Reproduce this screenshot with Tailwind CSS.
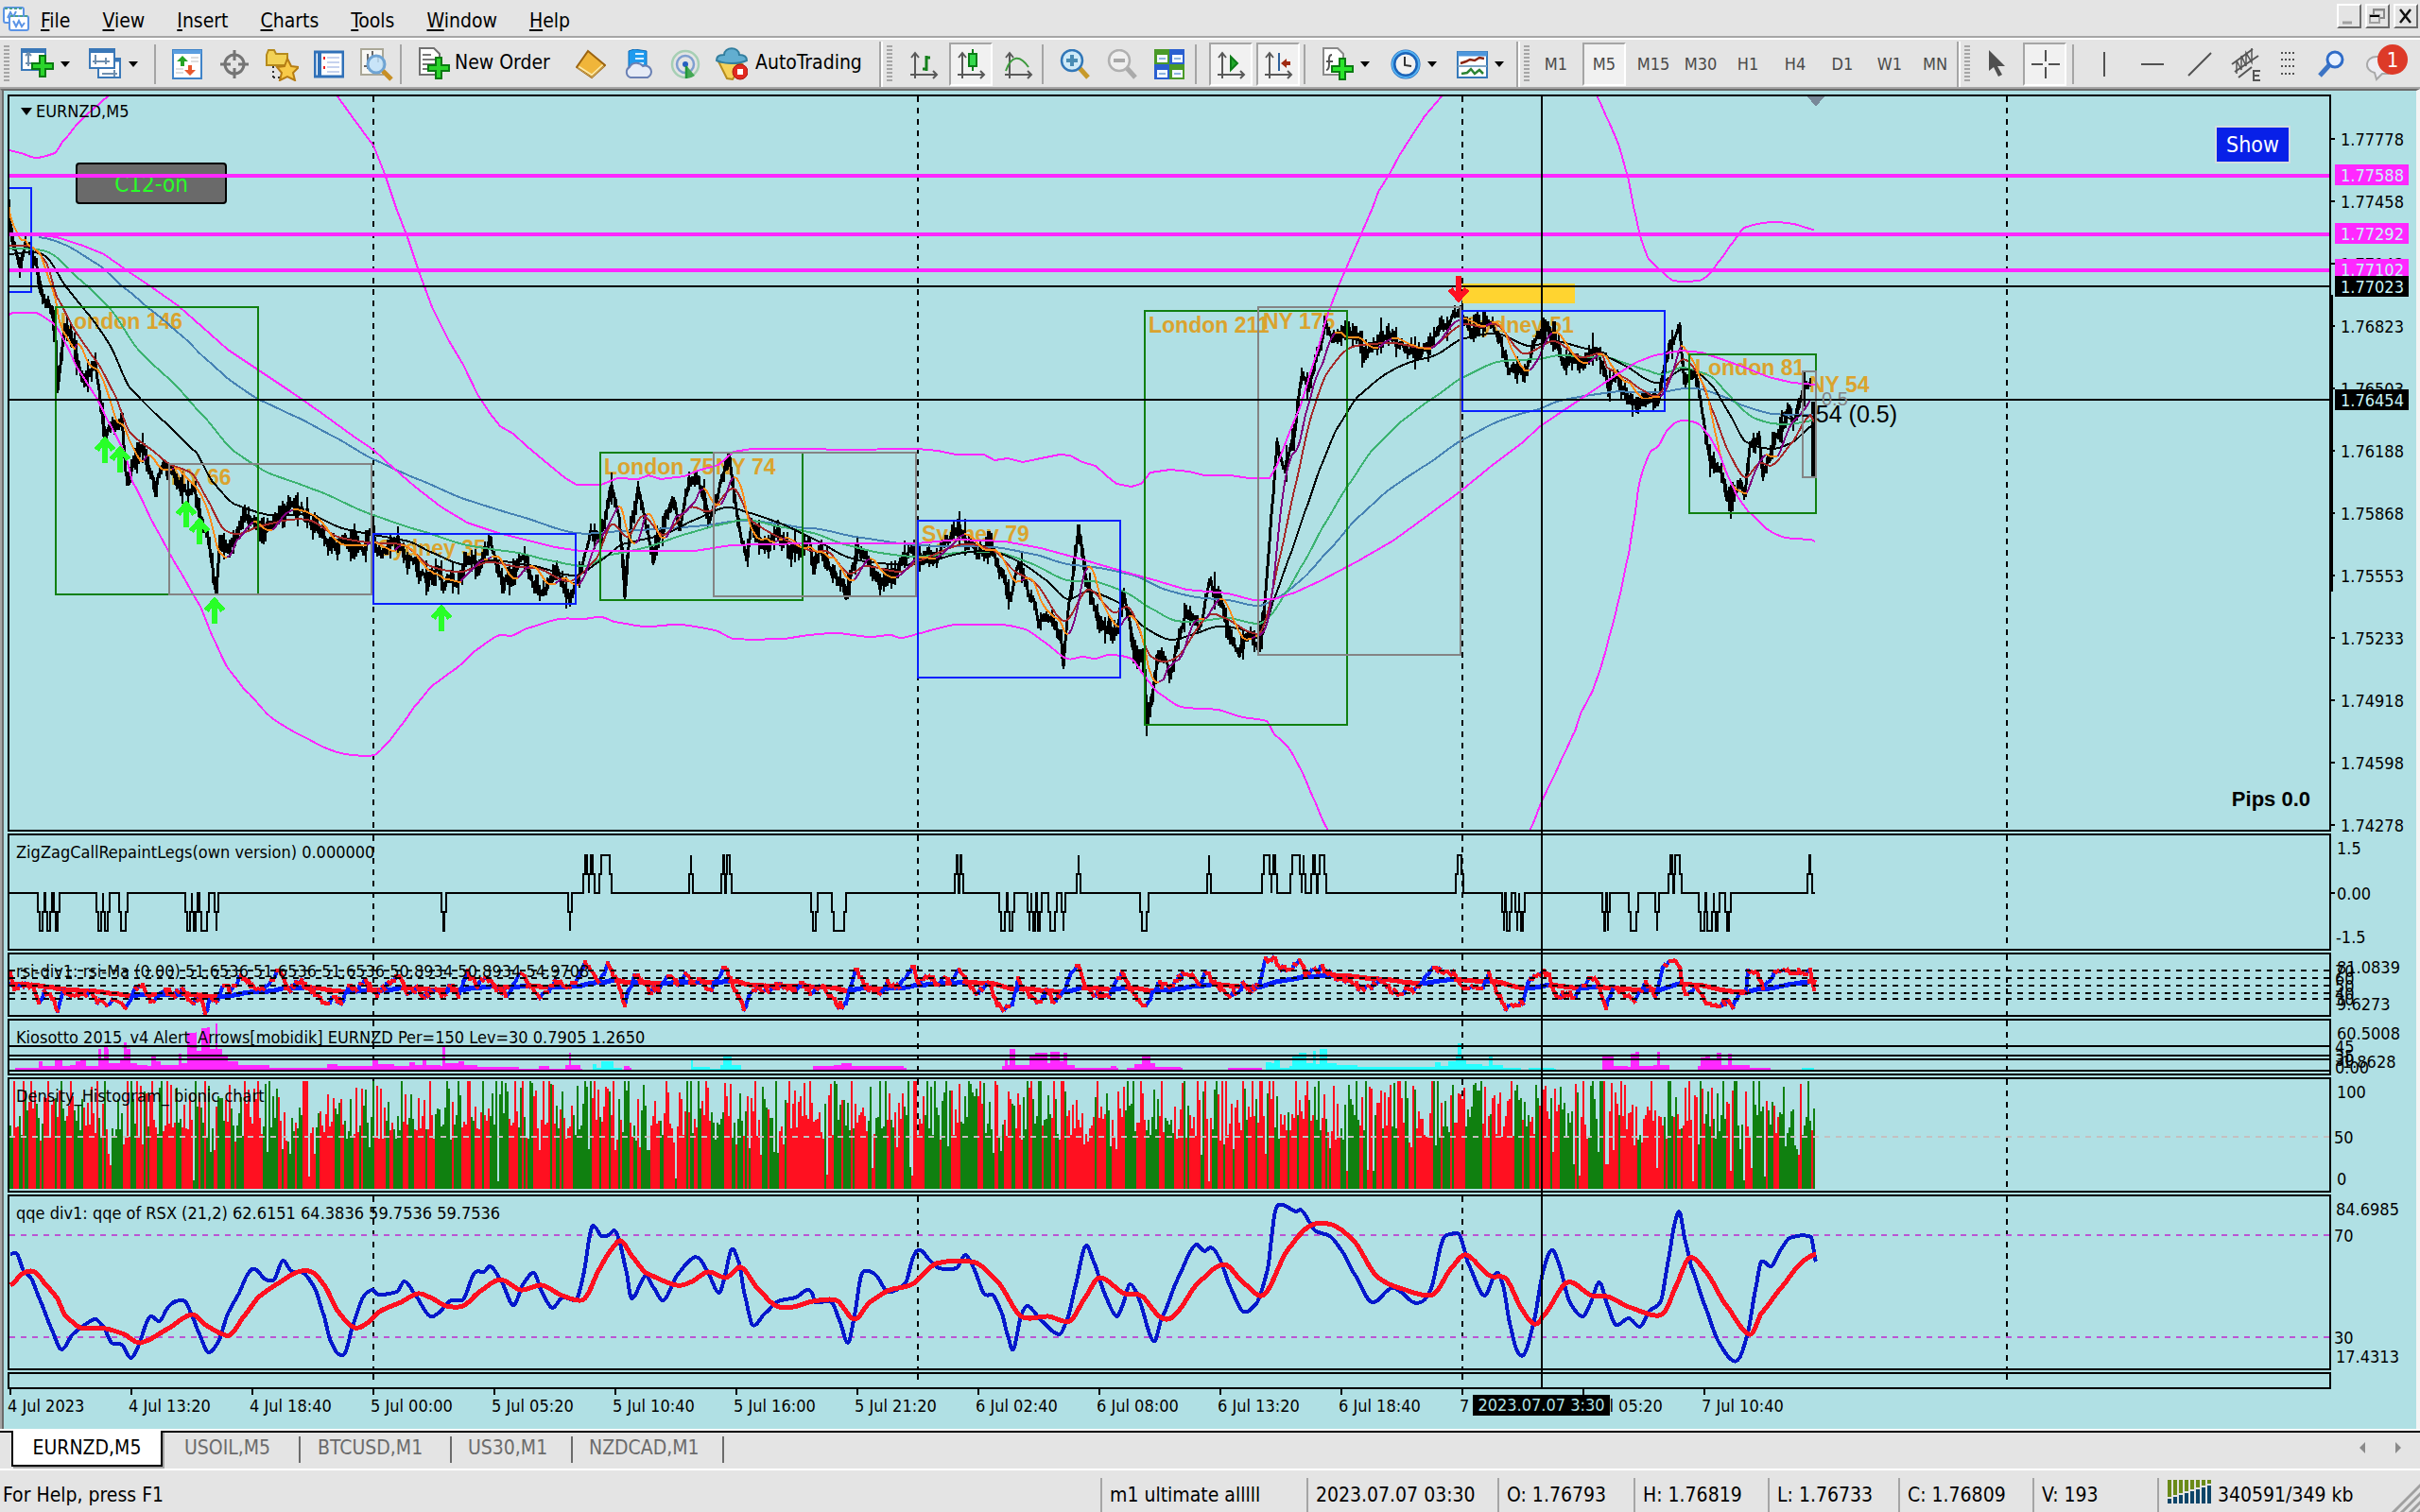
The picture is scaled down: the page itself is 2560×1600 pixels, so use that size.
<!DOCTYPE html>
<html lang="en">
<head>
  <meta charset="utf-8">
  <meta name="viewport" content="width=device-width, initial-scale=1">
  <title>EURNZD,M5</title>
  <script src="https://cdn.jsdelivr.net/npm/@tailwindcss/browser@4"></script>
</head>
<body class="flex min-h-screen flex-col overflow-x-hidden bg-[#e4e4e4] font-['DejaVu_Sans_Condensed','DejaVu_Sans',sans-serif] text-[21px] leading-6 text-black">

  <!-- menu bar -->
  <header class="flex h-10 items-center border-b-2 border-[#a5a5a5] pl-[3px] pr-0.5">
    <svg class="mr-3 h-7 w-7" viewBox="0 0 28 28" fill="#fff" stroke="#5b94e6" stroke-width="2">
      <rect x="1" y="3" width="21" height="16" rx="2"/><path d="M2 4h19" stroke="#49a08c" stroke-dasharray="3 2"/><path d="M5 14l3-6 3 5 3-6" fill="none"/>
      <rect x="7" y="12" width="20" height="15" rx="2"/><path d="M8 12h18" stroke="#49a08c" stroke-dasharray="3 2"/><path d="M11 17l3 6 3-6 3 6 3-4" fill="none"/>
    </svg>
    <nav class="flex flex-1 gap-[34px] pt-1.5">
      <a href="#"><u>F</u>ile</a>
      <a href="#"><u>V</u>iew</a>
      <a href="#"><u>I</u>nsert</a>
      <a href="#"><u>C</u>harts</a>
      <a href="#"><u>T</u>ools</a>
      <a href="#"><u>W</u>indow</a>
      <a href="#"><u>H</u>elp</a>
    </nav>
    <div class="flex gap-1 self-start pt-1">
      <button aria-label="Minimize" class="h-[26px] w-[26px] border-2 border-t-white border-l-white border-r-[#6b6b6b] border-b-[#6b6b6b]">
        <svg class="h-[22px] w-[22px]" viewBox="0 0 22 22"><path d="M4 18h10" stroke="#a0a0a0" stroke-width="3"/></svg>
      </button>
      <button aria-label="Restore" class="h-[26px] w-[26px] border-2 border-t-white border-l-white border-r-[#6b6b6b] border-b-[#6b6b6b]">
        <svg class="h-[22px] w-[22px]" viewBox="0 0 22 22" fill="none" stroke-width="2"><path d="M7 9V4h11v9h-4M7 4.500h11" stroke="#888"/><path d="M3 10h10v8H3zM3 11h10" stroke="#a0a0a0"/><path d="M3 11h10" stroke="#000"/></svg>
      </button>
      <button aria-label="Close" class="h-[26px] w-[26px] border-2 border-t-white border-l-white border-r-[#6b6b6b] border-b-[#6b6b6b]">
        <svg class="h-[22px] w-[22px]" viewBox="0 0 22 22"><path d="M5 4l11 14M16 4L5 18" stroke="#111" stroke-width="2.500"/></svg>
      </button>
    </div>
  </header>

  <!-- toolbar -->
  <div class="flex h-[54px] items-center border-t-2 border-b-2 border-t-white border-b-[#a5a5a5] pt-0.5 pl-1">
    <i class="mr-1.5 h-10 w-1.5 bg-[repeating-linear-gradient(#a5a5a5_0_2px,transparent_2px_4px)]"></i>
    <button aria-label="New chart" class="flex w-[72px] items-center gap-1.5 pl-1.5">
      <svg class="h-9 w-9" viewBox="0 0 36 36"><rect x="1" y="2" width="25" height="22" fill="#fff" stroke="#3a78b8" stroke-width="2"/><path d="M1 4h25" stroke="#3a78b8" stroke-width="4"/><path d="M8 7v13M5 9l3-3 3 3M5 17h12" stroke="#6f8fae" stroke-width="2" fill="none"/><path d="M20 9h6v8h8v6h-8v8h-6v-8h-8v-6h8z" fill="#2bd52b" stroke="#0a7a12" stroke-width="2"/></svg>
      <svg class="h-1.5 w-2.5" viewBox="0 0 10 6"><path d="M0 0h10L5 6z"/></svg>
    </button>
    <button aria-label="Profiles" class="flex w-[72px] items-center gap-1.5 pl-1.5">
      <svg class="h-9 w-9" viewBox="0 0 36 36" fill="#fff" stroke="#3a78b8" stroke-width="2"><rect x="10" y="12" width="23" height="20"/><path d="M10 14h23" stroke-width="3"/><path d="M14 28h16M27 24v7" stroke="#6f8fae"/><rect x="1" y="2" width="26" height="20"/><path d="M1 4h26" stroke-width="4"/><path d="M7 8v10M4 15h18M18 11v7" stroke="#6f8fae"/></svg>
      <svg class="h-1.5 w-2.5" viewBox="0 0 10 6"><path d="M0 0h10L5 6z"/></svg>
    </button>
    <i class="mr-1.5 ml-[3px] h-[42px] w-0.5 bg-[#a5a5a5]"></i>
    <button aria-label="Market watch" class="flex w-[50px] justify-center pl-1">
      <svg class="h-8 w-8" viewBox="0 0 32 32"><rect x="1" y="1" width="30" height="30" fill="#fff" stroke="#3f83c8" stroke-width="2"/><path d="M1 3h30" stroke="#5c9fe0" stroke-width="4"/><path d="M20 9h8M20 13h8M4 21h8M4 25h8" stroke="#ddd" stroke-width="2"/><path d="M11 7l6 6h-4v5H9v-5H5z" fill="#24a324"/><path d="M19 28l-6-6h4v-5h4v5h4z" fill="#e8582e"/></svg>
    </button>
    <button aria-label="Data window" class="flex w-[50px] justify-center pl-1">
      <svg class="h-8 w-8" viewBox="0 0 32 32" fill="none" stroke="#747474" stroke-width="3"><circle cx="16" cy="16" r="10"/><path d="M16 1v11M16 20v11M1 16h11M20 16h11"/></svg>
    </button>
    <button aria-label="Navigator" class="flex w-[50px] justify-center pl-1">
      <svg class="h-9 w-9" viewBox="0 0 36 36"><path d="M2 8l2-5h6l2 4h12v12H2z" fill="#f2d256" stroke="#b58a1c" stroke-width="2"/><path d="M9 20v13M9 32h8" stroke="#333" stroke-width="2" stroke-dasharray="2 3"/><path d="M24 12l4 8 8 1-6 6 2 8-8-4-8 4 2-8-5-6 8-1z" fill="#f8ca48" stroke="#b57c14" stroke-width="2"/></svg>
    </button>
    <button aria-label="Terminal" class="flex w-[50px] justify-center pl-1">
      <svg class="h-8 w-8" viewBox="0 0 32 32"><rect x="1" y="3" width="30" height="26" fill="#fff" stroke="#2f70b8" stroke-width="3"/><path d="M6 3v26" stroke="#2f70b8" stroke-width="4"/><path d="M14 9h13M14 14h13M14 19h13M14 24h13" stroke="#c6d2ee" stroke-width="2"/><path d="M11 8v3M11 18v3" stroke="#e22" stroke-width="2"/></svg>
    </button>
    <button aria-label="Strategy tester" class="flex w-[50px] justify-center pl-1">
      <svg class="h-9 w-9" viewBox="0 0 36 36"><rect x="2" y="2" width="23" height="27" fill="#f7f7f4" stroke="#aaa797" stroke-width="2"/><path d="M9 7v16M14 4v6M20 8v8M5 20h6" stroke="#666" stroke-width="2"/><circle cx="18" cy="18" r="9" fill="#bfe0f8" fill-opacity=".85" stroke="#6fa4d4" stroke-width="3"/><path d="M25 25l9 9" stroke="#c78f25" stroke-width="5"/></svg>
    </button>
    <i class="mx-0.5 h-[42px] w-0.5 bg-[#a5a5a5]"></i>
    <button class="flex w-[173px] items-center gap-1 pl-4">
      <svg class="h-9 w-[34px]" viewBox="0 0 34 36"><path d="M1 1h15l6 6v22H1z" fill="#fff" stroke="#707070" stroke-width="2"/><path d="M4 8h9M4 13h13M4 18h13M4 23h8" stroke="#777" stroke-width="2"/><path d="M18 11h6v8h8v6h-8v8h-6v-8h-8v-6h8z" fill="#2bd52b" stroke="#0a7a12" stroke-width="2"/></svg>
      <span class="-mt-1">New Order</span>
    </button>
    <button aria-label="MetaEditor" class="flex w-[50px] justify-center">
      <svg class="h-8 w-8" viewBox="0 0 32 32"><path d="M13 2l18 15-14 13L1 19z" fill="#f0b53a" stroke="#9c6410" stroke-width="2"/><path d="M3 19l14 9 12-11" stroke="#fce8a4" stroke-width="3" fill="none"/><path d="M3 20l14 9 13-12" stroke="#b07818" stroke-width="1" fill="none"/></svg>
    </button>
    <button aria-label="VPS" class="flex w-[50px] justify-center">
      <svg class="h-8 w-8" viewBox="0 0 32 32"><path d="M6 2l6-2 13 2v19H6z" fill="#1f9bef" stroke="#0f6cb8"/><path d="M13 5h9M13 10h9M13 15h9" stroke="#d9f0ff" stroke-width="2"/><path d="M8 30a6 6 0 0 1-1-11 8 7 0 0 1 14-1 6 6 0 0 1 5 12z" fill="#e6ebf6" stroke="#6a80b4" stroke-width="2"/></svg>
    </button>
    <button aria-label="Signals" class="flex w-[50px] justify-center">
      <svg class="h-8 w-8" viewBox="0 0 32 32" fill="none" stroke-width="2.500"><circle cx="16" cy="16" r="14" stroke="#a6cfb4"/><circle cx="16" cy="16" r="9" stroke="#7f9fd0"/><path d="M16 16L26 28A15 15 0 0 1 16 31z" fill="#45a855" stroke="none"/><circle cx="16" cy="16" r="3" fill="#2760c0" stroke="none"/><path d="M17 18v13" stroke="#22963a"/></svg>
    </button>
    <button class="flex w-[180px] items-center gap-2 pl-[7px]">
      <svg class="h-9 w-[34px]" viewBox="0 0 34 36"><path d="M3 15l9 18 6 1 10-16z" fill="#f5d25a" stroke="#b78d1e" stroke-width="2"/><path d="M1 14c0-5 4-6 8-6 0-9 16-9 16 0 5 0 8 2 8 6-8 4-24 4-32 0z" fill="#62aed0" stroke="#327e9e" stroke-width="2"/><circle cx="26" cy="26" r="8" fill="#e22a20" stroke="#a81810"/><rect x="23" y="23" width="6" height="6" fill="#fff"/></svg>
      <span class="-mt-1">AutoTrading</span>
    </button>
    <i class="mr-1 h-full w-1 border-r-2 border-l-2 border-l-[#a5a5a5] border-r-white"></i>
    <i class="mr-2 h-10 w-1.5 bg-[repeating-linear-gradient(#a5a5a5_0_2px,transparent_2px_4px)]"></i>
    <button aria-label="Bar chart" class="flex w-[50px] justify-center">
      <svg class="h-8 w-8" viewBox="0 0 32 32" fill="none" stroke="#585858" stroke-width="2"><path d="M7 31V4M3 9l4-5 4 5M2 27h28M26 23l4 4-4 4"/><path d="M19 7v16M19 9h4M15 21h4" stroke="#15801c" stroke-width="3"/></svg>
    </button>
    <button aria-label="Candlesticks" aria-pressed="true" class="mx-0.5 flex h-[46px] w-[46px] items-center justify-center border-2 border-t-[#a5a5a5] border-l-[#a5a5a5] border-r-white border-b-white bg-[#f1f1f1]">
      <svg class="h-8 w-8" viewBox="0 0 32 32" fill="none" stroke="#585858" stroke-width="2"><path d="M7 31V4M3 9l4-5 4 5M2 27h28M26 23l4 4-4 4"/><path d="M18 0v23" stroke="#0b7d18"/><rect x="14" y="5" width="8" height="13" fill="#35d94c" stroke="#0b7d18"/></svg>
    </button>
    <button aria-label="Line chart" class="flex w-[50px] justify-center">
      <svg class="h-8 w-8" viewBox="0 0 32 32" fill="none" stroke="#585858" stroke-width="2"><path d="M7 31V4M3 9l4-5 4 5M2 27h28M26 23l4 4-4 4"/><path d="M3 23C9 6 18 6 27 19" stroke="#3d9a3d"/></svg>
    </button>
    <i class="mr-2 h-[42px] w-0.5 bg-[#a5a5a5]"></i>
    <button aria-label="Zoom in" class="flex w-[50px] justify-center">
      <svg class="h-8 w-8" viewBox="0 0 32 32"><path d="M21 20l9 10" stroke="#c79a2a" stroke-width="5"/><circle cx="13" cy="12" r="11" fill="#cfeaf8" stroke="#3177b8" stroke-width="2.500"/><path d="M13 6v12M7 12h12" stroke="#4a8cb4" stroke-width="4"/></svg>
    </button>
    <button aria-label="Zoom out" class="flex w-[50px] justify-center">
      <svg class="h-8 w-8" viewBox="0 0 32 32"><path d="M21 20l9 10" stroke="#aaa" stroke-width="5"/><circle cx="13" cy="12" r="11" fill="#efefef" stroke="#b0b0b0" stroke-width="2.500"/><path d="M7 12h12" stroke="#a8a8a8" stroke-width="4"/></svg>
    </button>
    <button aria-label="Tile windows" class="flex w-[50px] justify-center">
      <svg class="h-8 w-8" viewBox="0 0 32 32"><path d="M0 0h16v16H0zM16 16h16v16H16z" fill="#4a9a28"/><path d="M16 0h16v16H16zM0 16h16v16H0z" fill="#2a5fd0"/><path d="M3 6h11v8H3zM19 6h11v8H19zM3 22h11v8H3zM19 22h11v8H19z" fill="#f4f8ff"/><path d="M5 10h7M21 10h7M5 26h7M21 26h7" stroke="#8cb4e0" stroke-width="2"/></svg>
    </button>
    <i class="mr-[13px] ml-0.5 h-[42px] w-0.5 bg-[#a5a5a5]"></i>
    <button aria-label="Auto scroll" aria-pressed="true" class="mr-1 flex h-[46px] w-[46px] items-center justify-center border-2 border-t-[#a5a5a5] border-l-[#a5a5a5] border-r-white border-b-white bg-[#f1f1f1]">
      <svg class="h-8 w-8" viewBox="0 0 32 32" fill="none" stroke="#585858" stroke-width="2"><path d="M7 31V4M3 9l4-5 4 5M2 27h28M26 23l4 4-4 4"/><path d="M16 8v14l7-7z" fill="#22a92c" stroke="#0d7d18"/></svg>
    </button>
    <button aria-label="Chart shift" aria-pressed="true" class="flex h-[46px] w-[46px] items-center justify-center border-2 border-t-[#a5a5a5] border-l-[#a5a5a5] border-r-white border-b-white bg-[#f1f1f1]">
      <svg class="h-8 w-8" viewBox="0 0 32 32" fill="none" stroke="#585858" stroke-width="2"><path d="M7 31V4M3 9l4-5 4 5M2 27h28M26 23l4 4-4 4"/><path d="M17 4v19" stroke="#2c5f9a"/><path d="M19 15l6-5v3h4v4h-4v3z" fill="#a02a10" stroke="none"/></svg>
    </button>
    <i class="mr-2.5 ml-1 h-[42px] w-0.5 bg-[#a5a5a5]"></i>
    <button aria-label="Indicators" class="flex w-[71px] items-center gap-1.5 pl-2">
      <svg class="h-9 w-[34px]" viewBox="0 0 34 36"><path d="M1 1h15l6 6v22H1z" fill="#fff" stroke="#8a8a8a" stroke-width="2"/><path d="M10 8c-4 0-3 6-3 9s0 7-3 7M4 15h7" stroke="#555" stroke-width="2" fill="none"/><path d="M18 12h6v8h8v6h-8v8h-6v-8h-8v-6h8z" fill="#2be52b" stroke="#0a7a12" stroke-width="2"/></svg>
      <svg class="h-1.5 w-2.5" viewBox="0 0 10 6"><path d="M0 0h10L5 6z"/></svg>
    </button>
    <button aria-label="Periods" class="flex w-[71px] items-center gap-1.5 pl-2">
      <svg class="h-8 w-[34px]" viewBox="0 0 34 32"><circle cx="17" cy="16" r="13" fill="#f1f1f1" stroke="#1b63b8" stroke-width="5"/><circle cx="17" cy="16" r="14" fill="none" stroke="#55b2f2" stroke-width="2"/><path d="M16 8v9l7 1" stroke="#333" stroke-width="2" fill="none"/></svg>
      <svg class="h-1.5 w-2.5" viewBox="0 0 10 6"><path d="M0 0h10L5 6z"/></svg>
    </button>
    <button aria-label="Templates" class="flex w-[71px] items-center gap-1.5 pl-2">
      <svg class="h-8 w-[34px]" viewBox="0 0 34 32"><rect x="1" y="3" width="31" height="27" fill="#fff" stroke="#3478b8" stroke-width="2"/><path d="M1 5h31" stroke="#4f97dc" stroke-width="5"/><path d="M1 18h31" stroke="#7fa4c4" stroke-width="2"/><path d="M4 15l6-2 4-2 5 1 5-3 5 1" stroke="#8a2410" stroke-width="2.500" fill="none"/><path d="M5 26l6-1 4-4 4 5 5-4 4 4" stroke="#2c8434" stroke-width="2.500" fill="none"/></svg>
      <svg class="h-1.5 w-2.5" viewBox="0 0 10 6"><path d="M0 0h10L5 6z"/></svg>
    </button>
    <i class="mr-1 h-full w-1 border-r-2 border-l-2 border-l-[#a5a5a5] border-r-white"></i>
    <i class="h-10 w-1.5 bg-[repeating-linear-gradient(#a5a5a5_0_2px,transparent_2px_4px)]"></i>
    <div class="flex items-center text-[18px] text-[#4a4a4a]">
      <button class="h-[46px] w-14">M1</button>
      <button aria-pressed="true" class="h-[46px] w-[46px] border-2 border-t-[#a5a5a5] border-l-[#a5a5a5] border-r-white border-b-white bg-[#f1f1f1]">M5</button>
      <button class="h-[46px] w-[54px] pl-1">M15</button>
      <button class="h-[46px] w-[50px]">M30</button>
      <button class="h-[46px] w-[50px]">H1</button>
      <button class="h-[46px] w-[50px]">H4</button>
      <button class="h-[46px] w-[50px]">D1</button>
      <button class="h-[46px] w-[50px]">W1</button>
      <button class="h-[46px] w-[46px]">MN</button>
    </div>
    <i class="mr-1 h-full w-1 border-r-2 border-l-2 border-l-[#a5a5a5] border-r-white"></i>
    <i class="h-10 w-1.5 bg-[repeating-linear-gradient(#a5a5a5_0_2px,transparent_2px_4px)]"></i>
    <button aria-label="Cursor" class="flex w-14 justify-center">
      <svg class="h-8 w-5" viewBox="0 0 20 32"><path d="M2 1v22l5-4 5 10 4-2-5-9h8z" fill="#505050"/></svg>
    </button>
    <button aria-label="Crosshair" aria-pressed="true" class="flex h-[46px] w-[46px] items-center justify-center border-2 border-t-[#a5a5a5] border-l-[#a5a5a5] border-r-white border-b-white bg-[#f1f1f1]">
      <svg class="h-8 w-8" viewBox="0 0 32 32"><path d="M17 1v12M17 19v12M2 16h12M20 16h12" stroke="#505050" stroke-width="2"/></svg>
    </button>
    <i class="mx-1.5 h-[42px] w-0.5 bg-[#a5a5a5]"></i>
    <button aria-label="Vertical line" class="flex w-[52px] justify-center"><svg class="h-8 w-8" viewBox="0 0 32 32"><path d="M16 3v26" stroke="#505050" stroke-width="2"/></svg></button>
    <button aria-label="Horizontal line" class="flex w-[50px] justify-center"><svg class="h-8 w-8" viewBox="0 0 32 32"><path d="M4 16h24" stroke="#505050" stroke-width="2"/></svg></button>
    <button aria-label="Trendline" class="flex w-[50px] justify-center"><svg class="h-8 w-8" viewBox="0 0 32 32"><path d="M4 28L28 4" stroke="#505050" stroke-width="2"/></svg></button>
    <button aria-label="Equidistant channel" class="flex w-[50px] justify-center">
      <svg class="h-9 w-9" viewBox="0 0 36 36" fill="none" stroke="#555" stroke-width="2"><path d="M2 18L24 2M5 26L30 9M9 32l14-11"/><path d="M7 28V14l5 10V9l5 11V6l6 10V1" stroke-width="1.500"/><path d="M32 25h-7v10h7M25 30h6"/></svg>
    </button>
    <button aria-label="Fibonacci" class="flex w-9 justify-center"><svg class="h-8 w-7" viewBox="0 0 28 32"><path d="M7 4h15M7 11h15M7 18h15M7 26h15" stroke="#505050" stroke-width="2" stroke-dasharray="2 2"/></svg></button>
    <button aria-label="Search" class="ml-1.5 flex w-[46px] justify-center">
      <svg class="h-8 w-8" viewBox="0 0 32 32"><path d="M13 17L3 28" stroke="#3c74c4" stroke-width="5"/><circle cx="19" cy="11" r="8" fill="#e8f1ff" stroke="#2f6cc8" stroke-width="3"/></svg>
    </button>
    <button aria-label="Notifications" class="ml-1.5 flex w-14 justify-center">
      <svg class="h-11 w-12" viewBox="0 0 48 44"><path d="M14 38l-2-7C0 28 2 14 14 14h12v18h-6z" fill="#ececf2" stroke="#a8a8a8" stroke-width="2"/><circle cx="31" cy="17" r="16" fill="#dd3a28"/><text x="31" y="25" fill="#fff" font-size="22" text-anchor="middle">1</text></svg>
    </button>
  </div>

  <!-- chart window -->
  <main class="relative flex flex-1 border-t-2 border-l-2 border-t-[#6b6b6b] border-l-[#a5a5a5] border-r-4 border-r-[#f4f4f4] bg-[#b0e0e4]">
    <div class="w-0.5 bg-[#6b6b6b]"></div>
    <div class="relative ml-1 flex min-w-0 flex-1 flex-col gap-0.5 pt-1 text-[18px]">

      <section class="relative h-[780px] border-2 border-black">
        <button class="absolute top-[70px] left-[70px] h-11 w-40 rounded border-2 border-black bg-[#6a6a6a] pt-0.5 text-[24px] text-[#28ff28]">C12-on</button>
        <svg id="main" class="relative pointer-events-none block h-full w-full" shape-rendering="crispEdges" fill="none"></svg>
        <p class="absolute top-1 left-3 flex items-center gap-1"><svg class="h-2 w-3" viewBox="0 0 12 8"><path d="M0 0h12L6 8z"/></svg>EURNZD,M5</p>
        <button class="absolute top-[31px] right-[41px] h-10 w-20 border-2 border-[#d4dce0] bg-[#0820e8] text-[23px] text-white">Show</button>
        <p class="absolute right-5 bottom-5 font-['Liberation_Sans',sans-serif] text-[22px] font-bold">Pips 0.0</p>
      </section>

      <section class="relative h-[124px] border-2 border-black">
        <svg id="zigzag" class="block h-full w-full" shape-rendering="crispEdges" fill="none"></svg>
        <p class="absolute top-1.5 left-[7px]">ZigZagCallRepaintLegs(own version) 0.000000</p>
      </section>

      <section class="relative h-[68px] border-2 border-black">
        <svg id="rsi" class="block h-full w-full" shape-rendering="crispEdges" fill="none"></svg>
        <p class="absolute top-1.5 left-[7px]">rsi-div1: rsi-Ma (0.00) 51.6536 51.6536 51.6536 50.8934 50.8934 54.9708</p>
      </section>

      <section class="relative h-[60px] border-2 border-black">
        <svg id="kiosotto" class="block h-full w-full" shape-rendering="crispEdges" fill="none"></svg>
        <p class="absolute top-1.5 left-[7px]">Kiosotto 2015_v4 Alert_Arrows[mobidik] EURNZD Per=150 Lev=30 0.7905 1.2650</p>
      </section>

      <section class="relative h-[122px] border-2 border-black">
        <svg id="density" class="block h-full w-full" shape-rendering="crispEdges" fill="none"></svg>
        <p class="absolute top-1.5 left-[7px]">Density_Histogram_ bionic chart</p>
      </section>

      <section class="relative h-[186px] border-2 border-black">
        <svg id="qqe" class="block h-full w-full" shape-rendering="crispEdges" fill="none"></svg>
        <p class="absolute top-1.5 left-[7px]">qqe div1: qqe of RSX (21,2) 62.6151 64.3836 59.7536 59.7536</p>
      </section>

      <section class="h-[18px] border-2 border-black">
        <svg id="strip" class="block h-full w-full" shape-rendering="crispEdges" fill="none"></svg>
      </section>

      <!-- time scale -->
      <div class="relative -mt-0.5 flex h-[42px] pl-0.5">
        <span class="w-32 shrink-0"><i class="block h-1.5 w-0.5 bg-black"></i><span class="-ml-0.5">4 Jul 2023</span></span>
        <span class="w-32 shrink-0"><i class="block h-1.5 w-0.5 bg-black"></i><span class="-ml-0.5">4 Jul 13:20</span></span>
        <span class="w-32 shrink-0"><i class="block h-1.5 w-0.5 bg-black"></i><span class="-ml-0.5">4 Jul 18:40</span></span>
        <span class="w-32 shrink-0"><i class="block h-1.5 w-0.5 bg-black"></i><span class="-ml-0.5">5 Jul 00:00</span></span>
        <span class="w-32 shrink-0"><i class="block h-1.5 w-0.5 bg-black"></i><span class="-ml-0.5">5 Jul 05:20</span></span>
        <span class="w-32 shrink-0"><i class="block h-1.5 w-0.5 bg-black"></i><span class="-ml-0.5">5 Jul 10:40</span></span>
        <span class="w-32 shrink-0"><i class="block h-1.5 w-0.5 bg-black"></i><span class="-ml-0.5">5 Jul 16:00</span></span>
        <span class="w-32 shrink-0"><i class="block h-1.5 w-0.5 bg-black"></i><span class="-ml-0.5">5 Jul 21:20</span></span>
        <span class="w-32 shrink-0"><i class="block h-1.5 w-0.5 bg-black"></i><span class="-ml-0.5">6 Jul 02:40</span></span>
        <span class="w-32 shrink-0"><i class="block h-1.5 w-0.5 bg-black"></i><span class="-ml-0.5">6 Jul 08:00</span></span>
        <span class="w-32 shrink-0"><i class="block h-1.5 w-0.5 bg-black"></i><span class="-ml-0.5">6 Jul 13:20</span></span>
        <span class="w-32 shrink-0"><i class="block h-1.5 w-0.5 bg-black"></i><span class="-ml-0.5">6 Jul 18:40</span></span>
        <span class="w-32 shrink-0"><i class="block h-1.5 w-0.5 bg-black"></i><span class="-ml-0.5">7 Jul 00:00</span></span>
        <span class="w-32 shrink-0"><i class="block h-1.5 w-0.5 bg-black"></i><span class="-ml-0.5">7 Jul 05:20</span></span>
        <span class="w-32 shrink-0"><i class="block h-1.5 w-0.5 bg-black"></i><span class="-ml-0.5">7 Jul 10:40</span></span>
        <span class="absolute top-1.5 left-[1550px] h-[22px] w-[145px] bg-black text-center leading-[22px] text-[#b0e0e4]">2023.07.07 3:30</span>
      </div>

      <!-- crosshair -->
      <div class="pointer-events-none absolute top-1 left-[1622px] h-[1370px] w-0.5 bg-black"></div>
    </div>
    <svg id="axis" class="w-[90px] shrink-0" font-size="18" shape-rendering="crispEdges"></svg>
  </main>

  <!-- chart tabs -->
  <nav class="flex h-11 items-start border-t-2 border-b-2 border-white pl-3 text-[#6b6b6b] shadow-[inset_0_2px_0_#000]">
    <a href="#" class="h-[38px] w-40 border-2 border-t-0 border-black bg-white pt-1.5 text-center text-black shadow-[2px_2px_0_#a5a5a5]">EURNZD,M5</a>
    <div class="flex pt-1.5">
      <a href="#" class="h-7 w-[146px] border-r-2 border-[#6b6b6b] pl-[23px]">USOIL,M5</a>
      <a href="#" class="h-7 w-40 border-r-2 border-[#6b6b6b] pl-[18px]">BTCUSD,M1</a>
      <a href="#" class="h-7 w-32 border-r-2 border-[#6b6b6b] pl-[17px]">US30,M1</a>
      <a href="#" class="h-7 w-40 border-r-2 border-[#6b6b6b] pl-[17px]">NZDCAD,M1</a>
    </div>
    <div class="ml-auto flex gap-8 pt-3 pr-[20px]">
      <button aria-label="Scroll left"><svg class="h-3 w-1.5" viewBox="0 0 6 12"><path d="M6 0v12L0 6z" fill="#8a8a8a"/></svg></button>
      <button aria-label="Scroll right"><svg class="h-3 w-1.5" viewBox="0 0 6 12"><path d="M0 0v12l6-6z" fill="#8a8a8a"/></svg></button>
    </div>
  </nav>

  <!-- status bar -->
  <footer class="flex h-11 items-center pt-2">
    <span class="flex-1 pl-[3px]">For Help, press F1</span>
    <span class="h-9 w-[218px] border-l-2 border-[#a5a5a5] pt-1.5 pl-2">m1 ultimate alllll</span>
    <span class="h-9 w-[202px] border-l-2 border-[#a5a5a5] pt-1.5 pl-2">2023.07.07 03:30</span>
    <span class="h-9 w-36 border-l-2 border-[#a5a5a5] pt-1.5 pl-2">O: 1.76793</span>
    <span class="h-9 w-[142px] border-l-2 border-[#a5a5a5] pt-1.5 pl-2">H: 1.76819</span>
    <span class="h-9 w-[138px] border-l-2 border-[#a5a5a5] pt-1.5 pl-2">L: 1.76733</span>
    <span class="h-9 w-[142px] border-l-2 border-[#a5a5a5] pt-1.5 pl-2">C: 1.76809</span>
    <span class="h-9 w-[132px] border-l-2 border-[#a5a5a5] pt-1.5 pl-2">V: 193</span>
    <span class="flex h-9 w-[246px] items-start gap-1.5 border-l-2 border-[#a5a5a5] pl-2">
      <svg class="h-7 w-12" viewBox="0 0 48 28" stroke-width="4"><path d="M3 2v18M9 2v16M15 2v14M21 2v12M27 2v10M33 2v8M39 2v6M45 2v4" stroke="#6a8a18"/><path d="M3 22v5M9 20v7M15 18v9M21 16v11M27 14v13M33 12v15M39 10v17M45 8v19" stroke="#0c4468"/></svg>
      <span class="pt-1.5">340591/349 kb</span>
    </span>
    <svg class="h-8 w-8 self-end" viewBox="0 0 32 32" stroke="#a0a0a0" stroke-width="3"><path d="M2 34L34 2M11 34L34 11M20 34l14-14M28 34l6-6"/></svg>
  </footer>

  <script>
    // Curves are stored in tiles: [x origin, y origin, x step, y step]
    const TILE = {
      t: [0, 0, .5485, .3333], u: [860, 0, .5485, .3333], v: [1700, 0, .5485, .3333],
      a: [0, 180, .5485, .4464], b: [860, 300, .5485, .3699], c: [1500, 280, .3571, .3827],
      d: [0, 880, .5485, .3333], e: [860, 880, .5485, .3333], f: [1700, 820, .5485, .4975],
      g: [0, 1250, .5485, .3333], h: [860, 1250, .7015, .3333]
    };
    // "a 1,2 3,4 b 5,6" -> [[x, y], ...] in window pixels
    function pts(s) {
      let t = TILE.a;
      const out = [];
      s.trim().split(/\s+/).forEach(w => {
        if (TILE[w]) { t = TILE[w]; return; }
        const [x, y] = w.split(',').map(Number);
        out.push([Math.round(t[0] + x * t[2]), Math.round(t[1] + y * t[3])]);
      });
      return out;
    }
    const line = (p, color, w = 2) => `<polyline points="${p.join(' ')}" stroke="${color}" stroke-width="${w}" stroke-linejoin="round"/>`;
    // rounded curve through the points
    function curve(p, color, w = 2) {
      let d = `M${p[0]}`;
      for (let i = 0; i < p.length - 1; i++) {
        const a = p[i - 1] || p[i], b = p[i], c = p[i + 1], e = p[i + 2] || c;
        d += `C${b[0] + (c[0] - b[0]) / 3} ${b[1] + (c[1] - a[1]) / 7} ${c[0] - (c[0] - b[0]) / 3} ${c[1] - (e[1] - b[1]) / 7} ${c}`;
      }
      return `<path d="${d}" stroke="${color}" stroke-width="${w}" stroke-linejoin="round"/>`;
    }
    const hline = (y, color, w = 2, dash = '') => `<line transform="translate(10 0)" x1="0" x2="100%" y1="${y}" y2="${y}" stroke="${color}" stroke-width="${w}" stroke-dasharray="${dash}"/>`;
    const days = (y1, y2) => [395, 971, 1547, 2123].map(x => `<line x1="${x}" x2="${x}" y1="${y1}" y2="${y2}" stroke="#000" stroke-width="2" stroke-dasharray="6 6"/>`).join('');
    const box = (x, y, x2, y2, color) => `<rect x="${x}" y="${y}" width="${x2 - x}" height="${y2 - y}" stroke="${color}" stroke-width="2"/>`;
    const put = (id, top, html) => document.getElementById(id).innerHTML = `<g transform="translate(-10 ${-top})">${html}</g>`;

    let seed = 7;
    const rnd = () => (seed = (seed * 16807) % 2147483647) / 2147483647;

    // value of a polyline every 2px
    function sample(p) {
      const out = [];
      let i = 0;
      for (let x = p[0][0]; x <= p[p.length - 1][0]; x += 2) {
        while (i < p.length - 2 && p[i + 1][0] < x) i++;
        const [x0, y0] = p[i], [x1, y1] = p[i + 1];
        out.push([x, x1 > x0 ? y0 + (y1 - y0) * (x - x0) / (x1 - x0) : y1]);
      }
      return out;
    }
    function sma(s, n) {
      return s.map(([x], i) => {
        const w = s.slice(Math.max(0, i - n + 1), i + 1);
        return [x, Math.round(w.reduce((a, b) => a + b[1], 0) / w.length)];
      });
    }
    // one path per direction: up colour while rising, down colour while falling
    function twoTone(s, up, down, w) {
      let u = '', d = '';
      for (let i = 1; i < s.length; i++) {
        const seg = `M${s[i - 1]}L${s[i]}`;
        if (s[i][1] < s[i - 1][1]) u += seg; else d += seg;
      }
      return `<path d="${u}" stroke="${up}" stroke-width="${w}" stroke-linecap="square"/><path d="${d}" stroke="${down}" stroke-width="${w}" stroke-linecap="square"/>`;
    }

    // ---- price ----
    const price = sample(pts(`a 17,80 20,140 38,210 50,160 65,200 80,280 100,325 108,390 112,525 118,430 125,370 150,450 165,490 185,450 195,560 205,615 220,600 235,590 245,750 255,690 275,655 300,745 315,680 340,730 355,740 375,770 400,860 418,1000 425,880 450,880 470,810 500,870 525,830 540,800 580,810 605,830 635,890 700,890 720,860 725,930 740,900 770,880 795,930 820,960 850,960 856,1020 862,960 885,980 905,910 920,940 945,890 970,990 1010,920 1045,1000 1075,950 1100,1010 1110,970 1140,850 1155,880 1178,750 1195,820 1206,1010 1214,880 1230,760 1260,910 1298,780 1310,850 1330,740 1350,750 1370,830 1405,680 1420,790 1440,920 1450,850 1480,900 1500,850 1520,900 1562,890
      b 0,820 12,755 65,880 85,760 130,850 160,830 190,765 210,800 240,765 283,700 310,770 345,755 380,895 397,800 435,960 450,940 478,1000 484,1110 490,970 513,720 525,850 555,960 585,1000 600,880 620,1050 640,1100 643,1245 650,1190 670,1050 690,1120 720,930 745,990 765,860 800,980 820,1050 840,980 858,1030 870,950 885,640 895,460 910,520 930,440 945,240 955,300 975,190 988,100 1010,170 1035,140 1065,200 1100,150 1160,190 1190,180 1210,120 1247,90 1270,135 1305,95 1330,180 1340,230 1372,265 1390,180 1415,115 1445,200 1475,240 1510,180 1530,250 1535,310 1545,260 1565,290
      c 626,360 645,390 680,350 710,390 735,260 755,220 775,170 790,340 815,290 835,340 865,540 900,590 930,660 950,600 970,650 985,500 1010,490 1020,590 1060,480 1095,400 1115,440 1140,360 1165,310`));
    let wick = '', body = '', drift = 0;
    const mids = [];
    price.forEach(([x, y]) => {
      drift = drift * .6 + (rnd() - .5) * 11;
      const m = y + drift;
      const r = 3 + rnd() * rnd() * 18;
      mids.push([x, Math.round(m)]);
      wick += `M${x} ${Math.round(m - r)}V${Math.round(m + r)}`;
      if (rnd() > .6) body += `M${x} ${Math.round(m - 4)}V${Math.round(m + 5)}`;
    });

    const arrow = (x, y) => `<path d="M${x} ${y + 4}v24M${x - 9} ${y + 14}l9-10 9 10" stroke="#28ff28" stroke-width="6"/>`;
    const tag = (x, y, s) => `<text x="${x}" y="${y}" fill="#daa32e" stroke="none">${s}</text>`;

    put('main', 102,
      days(102, 880) +
      '<rect x="1547" y="300" width="119" height="21" fill="#ffd430"/>' +
      `<g font-family="Liberation Sans, sans-serif" font-size="23" font-weight="bold">` +
        tag(64, 348, 'London 146') + tag(181, 513, 'NY 66') + tag(400, 588, 'Sydney 35') + tag(639, 502, 'London 75') + tag(757, 502, 'NY 74') +
        tag(975, 573, 'Sydney 79') + tag(1215, 352, 'London 211') + tag(1336, 348, 'NY 175') + tag(1551, 352, 'Sydney 51') + tag(1793, 397, 'London 81') + tag(1914, 415, 'NY 54') + '</g>' +
      `<path d="${wick}" stroke="#000" stroke-width="2"/><path d="${body}" stroke="#000" stroke-width="4"/>` + line(mids, '#000', 3) +
      '<rect x="1916" y="425" width="5" height="79" fill="#000"/>' +
      // moving averages
      curve(pts(`a 75,158 120,175 190,225 240,280 300,340 350,392 400,450 450,505 500,545 570,585 640,630 720,685 800,730 900,782 1000,820 1110,860 1200,855 1290,848 1360,842 1430,832 1500,838 1555,848 b 0,700 80,725 200,748 350,755 430,775 490,802 540,812 620,835 680,875 740,897 800,905 860,922 900,895 940,850 990,770 1050,670 1120,580 1180,522 1250,448 1330,390 1400,360 1440,335 1500,318 1560,308 c 620,352 720,352 790,342 840,345 900,362 970,392 1050,414 1170,416`), '#4682b4') +
      curve(pts(`a 17,185 70,188 100,200 150,255 210,325 270,430 330,500 390,580 450,665 520,720 600,755 720,818 820,858 900,890 1000,908 1060,925 1130,938 1170,915 1240,895 1330,860 1400,838 1440,828 1500,845 b 0,715 60,745 130,770 200,780 300,768 360,770 420,800 490,850 540,852 600,880 660,935 700,965 750,965 800,957 860,972 885,945 910,890 940,810 990,680 1030,580 1080,475 1140,390 1200,325 1250,270 1320,225 1400,215 1440,206 1500,210 1530,206 c 560,256 620,275 680,292 720,302 780,285 830,295 870,312 910,350 960,400 1000,425 1050,440 1100,442 1170,432`), '#3cb371') +
      curve(pts(`a 17,200 60,195 90,205 130,280 170,340 210,410 250,515 310,590 380,670 410,740 450,790 520,818 600,818 660,850 720,865 790,880 830,905 890,935 950,925 1030,938 1110,960 1160,925 1200,888 1280,865 1340,828 1400,800 1440,812 1500,835 b 0,730 70,785 130,800 200,803 290,770 350,768 400,798 450,850 490,903 530,880 590,915 640,985 690,1020 740,1000 780,980 830,990 865,1010 890,900 920,775 950,650 980,520 1010,415 1050,325 1110,255 1160,222 1200,205 1250,160 1320,142 1380,178 1430,165 1500,190 1530,200 c 560,255 620,282 680,318 720,326 780,290 830,300 870,335 920,410 970,488 1050,510 1110,490 1170,445`), '#000') +
      curve(pts(`a 17,180 60,182 90,220 110,300 150,390 190,460 220,530 250,620 290,660 330,700 370,720 400,780 430,850 460,862 500,845 560,828 600,830 650,870 710,882 780,890 830,938 890,952 940,930 1000,940 1040,945 1100,975 1150,920 1180,840 1210,870 1240,820 1280,865 1330,800 1370,808 1415,755 1450,830 1500,870 b 0,765 30,768 70,830 100,808 170,825 200,795 290,745 350,765 390,825 430,860 485,965 530,875 580,940 610,930 650,1065 700,1070 760,955 790,955 850,1000 870,975 900,780 930,580 960,380 990,260 1030,190 1060,175 1120,170 1190,185 1250,120 1290,125 1320,120 1370,200 1430,165 1480,210 1520,200 c 560,285 620,315 660,345 710,360 780,265 830,300 870,400 920,520 970,588 1010,550 1050,555 1110,490 1160,418 1172,435`), '#a52a2a') +
      twoTone(sma(price, 10), '#800080', '#ff8c1a', 2) +
      // bands
      curve(pts('t 17,476 40,487 70,502 105,487 120,450 155,385 180,345 210,306'), '#ff28ff') +
      line(pts(`t 650,306 683,380 720,462 742,552 764,660 a 785,160 808,240 833,325 865,400 893,462 920,530 945,575 965,608 990,625 1015,655 1060,700 1090,730 1113,745 1160,745 1190,730 1230,732 1250,724 1275,732 1320,725 1345,712 1385,700 1415,668 1450,661 1568,661 b 50,476 200,472 240,478 275,488 330,490 350,505 375,500 405,511 440,500 475,488 495,491 520,512 545,522 565,550 585,574 615,581 632,572 650,542 690,532 725,537 755,548 805,550 840,558 880,558 895,520 920,420 940,350 960,250 975,180 990,100 1003,50 1016,0 u 1080,660 1090,610 1113,552 1130,495 1155,430 1180,370 1213,306`), '#ff28ff') +
      curve(pts('u 1511,306 1530,370 v 20,450 40,560 55,680 65,760 80,822 105,862 128,890 178,890 195,872 215,830 240,775 265,722 318,705 360,710 400,730'), '#ff28ff') +
      line(pts(`a 62,152 110,160 160,180 200,200 245,238 300,285 345,322 390,372 440,425 500,475 560,525 620,575 680,630 720,662 760,708 800,750 850,798 900,835 960,860 1020,878 1070,893 1120,902 1340,902 1410,889 1470,886 1568,884 b 200,743 280,733 370,737 440,757 520,790 600,825 660,850 720,876 800,888 850,905 890,902 930,885 980,850 1050,795 1120,735 1180,670 1250,593 1310,520 1370,455 1400,412 1440,370 1490,322 1530,280 1568,244 c 650,268 700,252 780,238 840,242 900,262 970,285 1040,310 1110,326 1175,332`), '#ff28ff') +
      curve(pts(`a 17,342 25,338 70,338 90,352 108,370 125,410 150,470 185,535 215,610 240,670 255,740 300,850 345,945 385,1030 415,1120 440,1180 470,1230 525,1300 580,1340 640,1375 680,1386 722,1386 745,1360 775,1315 800,1270 835,1220 880,1180 920,1135 965,1102 985,1105 1015,1087 1080,1065 1125,1065 1160,1059 1185,1070 1245,1081 1310,1077 1380,1090 1415,1112 1510,1112 1560,1103 b 45,1000 110,1012 150,1007 170,1013 200,1003 240,988 275,975 365,975 410,990 445,1025 490,1073 520,1067 545,1073 570,1063 615,1072 640,1125 665,1170 710,1212 780,1220 830,1240 875,1253 890,1290 915,1325 940,1390 965,1470 994,1562`), '#ff28ff') +
      curve(pts('c 330,1562 370,1480 400,1420 430,1355 465,1290 485,1235 515,1185 535,1135 550,1090 570,1015 595,930 625,800 640,700 655,605 672,555 690,518 710,502 740,458 765,436 790,432 830,438 860,470 890,520 920,590 950,645 980,685 1040,735 1090,755 1165,761 1175,766'), '#ff28ff') +
      // sessions
      box(9, 199, 33, 309, '#0820ff') + box(395, 565, 609, 639, '#0820ff') + box(971, 551, 1185, 717, '#0820ff') + box(1547, 329, 1761, 435, '#0820ff') +
      box(59, 325, 273, 629, '#108010') + box(635, 479, 849, 635, '#108010') + box(1211, 329, 1425, 767, '#108010') + box(1787, 375, 1921, 543, '#108010') +
      box(179, 491, 393, 629, '#848484') + box(755, 479, 969, 631, '#848484') + box(1331, 325, 1545, 693, '#848484') + box(1907, 393, 1921, 505, '#848484') +
      hline(303, '#000') + hline(423, '#000') +
      hline(186, '#ff28ff', 4) + hline(248, '#ff28ff', 4) + hline(286, '#ff28ff', 4) +
      '<path d="M1912 102h18l-9 11z" fill="#788898"/>' +
      arrow(111, 462) + arrow(127, 472) + arrow(197, 530) + arrow(211, 548) + arrow(227, 632) + arrow(467, 640) +
      '<path d="M1543 292v24M1534 306l9 10 9-10" stroke="#ff1020" stroke-width="6"/>' +
      '<g font-family="Liberation Sans, sans-serif"><text x="1927" y="429" fill="#848484" font-size="20">0.5</text>' +
      '<text x="2007" y="447" fill="#000" font-size="25" text-anchor="end">&lt;-- 54 (0.5)</text></g>'
    );

    // ---- zigzag legs ----
    const legs = [
      ['d', -1, [[77, 82], [92, 97], [107, 112], [190, 195], [202, 207], [234, 242], [361, 366], [373, 378], [388, 399], [417, 418], [855, 856], [1099, 1100]]],
      ['d', 1, [[1128, 1133], [1139, 1143], [1160, 1176], [1332, 1333], [1395, 1396], [1402, 1407]]],
      ['e', -1, [[0, 5], [41, 60]]], ['e', 1, [[278, 279], [285, 286]]],
      ['e', -1, [[362, 370], [380, 385], [417, 418], [424, 428], [434, 437], [458, 466], [483, 484]]], ['e', 1, [[512, 513]]],
      ['e', -1, [[635, 643]]], ['e', 1, [[763, 764], [870, 881], [887, 892], [924, 939], [946, 947], [965, 968], [978, 987], [1244, 1250]]],
      ['e', -1, [[1332, 1333], [1339, 1344], [1358, 1359], [1366, 1370], [1526, 1527], [1533, 1534]]],
      ['f', -1, [[46, 57], [96, 97]]], ['f', 1, [[122, 126], [132, 141]]],
      ['f', -1, [[180, 187], [194, 202], [209, 213], [232, 236]]], ['f', 1, [[391, 392]]]
    ];
    let z = 'M10 945';
    legs.forEach(([t, dir, list]) => list.forEach(([l, r]) => {
      const x0 = Math.round(TILE[t][0] + l * .5485), x1 = Math.round(TILE[t][0] + r * .5485);
      const mid = 945 - dir * 20, end = 945 - dir * 40;
      z += `H${x0 - 2}V${mid}H${x0}V${end}H${x1}V${mid}H${x1 + 2}V945`;
    }));
    put('zigzag', 884, days(884, 1006) + `<path d="${z}H1920" stroke="#000" stroke-width="2"/>`);

    // ---- rsi ----
    const rsi = sample(pts(`d 20,455 30,500 50,480 65,500 75,540 88,505 100,525 112,565 122,510 150,525 175,515 190,540 205,552 220,530 232,545 245,565 262,495 278,495 295,545 310,500 340,515 350,495 368,550 382,525 397,572 405,520 418,545 432,480 445,505 465,460 492,495 510,500 537,435 560,500 580,470 605,510 625,545 645,530 660,540 672,490 690,500 705,475 725,520 745,490 770,460 790,520 805,495 817,530 840,495 855,520 870,490 885,520 902,450 920,490 935,460 960,505 980,520 1005,450 1025,495 1043,530 1075,475 1090,495 1112,480 1127,415 1155,470 1172,425 1190,480 1206,545 1225,450 1255,510 1270,495 1290,450 1305,480 1325,450 1340,490 1350,460 1370,510 1397,425 1410,470 1437,560 1450,500 1480,505 1500,490 1530,500 1550,480 1566,520
      e 15,480 30,520 50,552 62,550 82,435 100,490 125,515 145,480 165,490 193,430 205,480 225,460 240,485 255,460 265,485 280,435 300,490 318,510 340,480 350,530 365,560 385,550 395,470 415,520 437,545 450,505 465,540 480,520 495,460 512,420 525,490 545,520 570,520 597,450 615,510 640,555 655,510 670,485 690,490 715,450 732,450 748,490 758,440 775,485 800,520 820,510 830,485 845,505 862,480 872,410 890,405 905,435 925,430 937,410 950,450 985,435 1000,460 1030,470 1065,505 1100,465 1115,510 1135,510 1145,500 1160,500 1180,470 1200,430 1215,450 1235,450 1250,490 1290,500 1303,450 1315,490 1335,560 1370,540 1385,460 1400,450 1418,450 1430,520 1460,520 1470,525 1500,460 1515,490 1530,555 1545,500
      f 20,455 40,470 55,482 75,440 95,470 108,410 125,393 138,405 150,470 170,450 190,480 212,493 230,482 242,490 255,460 268,462 272,420 292,425 300,450 312,440 330,415 348,412 360,425 370,418 385,428 392,410 400,458`)
    ).map(([x, y]) => [x, Math.round(y + (rnd() - .5) * 6)]);
    let ema = 1042;
    const slow = rsi.map(([x, y]) => [x, ema += (y - ema) * .025]);
    put('rsi', 1010,
      days(1010, 1076) + twoTone(slow, '#0820ff', '#ff1020', 5) + twoTone(rsi, '#0820ff', '#ff1020', 4) +
      [1027, 1035, 1043, 1051, 1057].map(y => hline(y, '#000', 2, '6 6')).join(''));

    // ---- kiosotto ----
    const area = (s, color, base = 1132) => {
      const p = pts(s);
      return `<path d="M${p[0][0]} ${base}${p.map(([x, y]) => `H${x}V${y}`).join('')}h2V${base}z" fill="${color}"/>`;
    };
    put('kiosotto', 1080,
      days(1080, 1138) +
      area('d 17,755 30,751 62,751 75,730 82,745 105,725 115,725 120,745 135,740 145,730 155,725 165,745 185,745 190,690 195,720 200,683 207,690 210,735 232,725 238,668 244,690 252,735 265,740 285,745 292,715 300,730 310,740 325,742 345,705 350,735 361,640 378,636 380,695 388,625 400,620 405,690 415,610 420,690 428,715 440,730 460,742 520,750 610,750 630,738 650,745 700,745 718,725 730,738 760,745 785,745 790,732 800,740 815,725 822,742 850,745 854,683 858,735 885,728 895,742 920,748 1000,752 1040,745 1060,752 1090,742 1098,702 1102,740 1120,752', '#ff28ff') +
      area('d 1120,757 1143,738 1150,750 1160,730 1175,728 1183,750 1200,757', '#28ffff') + area('d 1325,757 1332,727 1337,748 1370,753 1390,740 1395,712 1408,712 1412,742 1430,757', '#28ffff') +
      area('d 1203,745 1215,751', '#ff28ff') +
      area('e 0,745 40,740 55,736 75,745 125,745 175,750 180,757', '#ff28ff') +
      area('e 350,757 365,745 370,725 376,740 380,690 386,690 390,740 415,742 418,710 428,702 445,702 452,735 458,700 468,700 475,730 483,702 490,740 505,750 535,750 575,745 585,750', '#ff28ff') +
      area('e 605,750 620,738 635,715 643,712 650,735 660,748 710,750', '#ff28ff') + area('e 800,750 862,750', '#ff28ff') +
      area('e 870,757 873,733 885,735 890,722 900,750 918,745 925,712 937,702 947,702 952,735 965,696 970,738 978,690 986,690 992,735 1010,740 1050,748 1190,748 1200,733 1210,745 1225,728 1240,712 1244,672 1250,720 1260,738 1290,745 1303,715 1310,740 1330,750 1365,757', '#28ffff') +
      area('e 1380,750 1430,752', '#28ffff') + area('e 1515,757 1523,712 1535,715 1545,745 1564,748', '#ff28ff') +
      area('f 0,610 5,620 40,622 45,592 55,588 62,620 90,618 97,588 103,618 120,627', '#ff28ff') +
      area('f 140,627 175,620 180,600 190,598 198,605 212,590 220,618 233,592 240,618 265,618 275,624 315,627', '#ff28ff') + area('f 375,623 395,623', '#28ffff') +
      [1107, 1117, 1121, 1133].map(y => hline(y, '#000')).join(''));

    // ---- density histogram ----
    let red = '', green = '', isRed = true;
    for (let x = 11; x <= 1920; x += 2) {
      if (rnd() < .3) isRed = !isRed;
      const r = rnd();
      const top = r < .14 ? 1144 : r < .66 ? 1146 + rnd() * 50 : r < .9 ? 1180 + rnd() * 26 : r < .98 ? 1203 + rnd() * 20 : 1230 + rnd() * 24;
      const bar = `M${x} 1258V${Math.round(top)}`;
      if (isRed && x < 1919) red += bar; else green += bar;
    }
    put('density', 1142,
      days(1142, 1262) + `<path d="${red}" stroke="#ff1020" stroke-width="2"/><path d="${green}" stroke="#108010" stroke-width="2"/>` + hline(1203, '#c4c0c0', 2, '6 6'));

    // ---- qqe ----
    put('qqe', 1266,
      days(1266, 1450) + hline(1307, '#ba55d3', 2, '6 6') + hline(1415, '#ba55d3', 2, '6 6') +
      curve(pts(`g 20,230 32,230 45,285 60,310 75,370 100,470 118,535 140,485 160,460 185,437 200,465 215,512 235,518 252,560 265,530 288,432 308,445 325,400 340,382 358,382 370,425 385,485 402,542 422,510 440,420 460,360 480,290 493,280 512,312 528,312 545,252 562,285 585,292 608,340 625,430 637,500 650,547 666,547 680,460 700,370 718,345 730,360 765,352 781,318 800,360 828,427 845,420 870,378 893,374 915,290 933,288 947,270 968,320 990,392 1010,325 1030,292 1045,350 1065,403 1085,370 1112,375 1125,300 1140,160 1147,143 1160,175 1175,172 1185,155 1195,190 1208,290 1218,373 1245,300 1260,335 1280,378 1305,300 1335,245 1350,246 1365,290 1385,355 1395,320 1412,215 1425,260 1435,350 1452,457 1475,420 1500,380 1535,368 1557,345 1566,355
        h 3,385 28,385 40,440 53,512 62,440 73,300 83,286 95,300 112,352 140,325 152,235 162,220 175,250 190,275 217,275 229,233 243,275 258,358 272,362 285,420 293,490 302,535 313,430 324,395 345,445 372,487 385,430 395,340 410,207 422,250 440,360 457,428 468,390 478,328 490,370 513,507 525,440 550,310 576,203 590,222 600,210 612,240 630,340 648,415 670,385 685,280 697,95 707,76 728,95 737,92 757,155 780,175 797,220 815,290 843,385 872,340 888,355 905,383 920,380 932,340 950,190 962,168 975,172 988,260 1012,362 1030,292 1040,330 1050,450 1062,540 1074,547 1088,440 1100,290 1113,220 1125,260 1140,380 1160,428 1172,390 1186,322 1197,390 1210,457 1230,435 1248,463 1262,410 1278,380 1290,250 1300,130 1307,100 1315,180 1325,270 1345,400 1365,510 1385,567 1397,560 1410,480 1422,330 1430,255 1445,270 1460,215 1472,180 1505,178 1512,255`), '#0418cc', 4) +
      curve(pts(`g 20,330 45,290 68,288 90,330 110,370 125,425 155,465 205,467 240,485 262,510 278,510 320,470 370,423 400,460 430,487 445,485 470,430 500,365 540,320 575,288 602,288 625,330 650,410 680,462 700,460 735,412 770,388 805,358 830,370 860,396 893,395 925,350 965,312 1005,345 1045,330 1085,362 1115,378 1130,365 1155,280 1180,215 1198,190 1220,240 1245,292 1305,330 1330,322 1365,288 1400,305 1430,273 1460,340 1497,395 1530,400 1568,380
        h 35,378 63,438 85,385 115,345 150,328 185,260 245,258 280,320 313,430 355,428 388,445 410,370 432,306 470,358 495,362 525,432 545,425 580,325 620,263 650,325 680,360 715,220 750,140 783,137 815,190 850,300 880,335 935,360 965,270 985,235 1020,300 1045,310 1070,410 1088,452 1100,430 1137,322 1175,362 1197,365 1230,400 1270,427 1285,415 1300,340 1322,243 1345,285 1375,390 1412,487 1430,420 1460,340 1490,260 1512,230`), '#ff1020', 5));
    put('strip', 1454, days(1454, 1460));

    // ---- price axis ----
    const label = (x, y, s, color = '#000') => `<text x="${x}" y="${y + 7}" fill="${color}">${s}</text>`;
    const flag = (y, s, bg) => `<rect x="4" y="${y - 11}" width="78" height="22" fill="${bg}"/>` + label(10, y, s, '#c8f4f8');
    const tick = y => `<path d="M0 ${y}h4" stroke="#000" stroke-width="2"/>`;
    let ax = '<path d="M0 312v314" stroke="#000" stroke-width="4"/>';
    ['1.77778', '1.77458', '1.77143', '1.76823', '1.76503', '1.76188', '1.75868', '1.75553', '1.75233', '1.74918', '1.74598', '1.74278']
      .forEach((s, i) => ax += tick(147 + i * 66) + label(10, 147 + i * 66, s));
    ax += flag(185, '1.77588', '#ff28ff') + flag(247, '1.77292', '#ff28ff') + flag(285, '1.77102', '#ff28ff') + flag(303, '1.77023', '#000') + flag(423, '1.76454', '#000');
    ax += label(6, 897, '1.5') + tick(945) + label(6, 945, '0.00') + label(5, 991, '-1.5');
    ax += label(6, 1023, '81.0839') + label(6, 1062, '9.6273') + label(4, 1027, '70') + label(4, 1035, '60') + label(4, 1043, '50') + label(4, 1051, '40') + label(4, 1057, '30');
    ax += label(6, 1093, '60.5008') + label(6, 1123, '-1.8628') + label(4, 1107, '45') + label(4, 1117, '35') + label(4, 1121, '30') + label(4, 1129, '0.00');
    ax += label(6, 1155, '100') + label(3, 1203, '50') + label(6, 1247, '0');
    ax += label(5, 1279, '84.6985') + label(3, 1307, '70') + label(3, 1415, '30') + label(5, 1435, '17.4313');
    document.getElementById('axis').innerHTML = `<g transform="translate(0 -96)">${ax}</g>`;
  </script>
</body>
</html>
